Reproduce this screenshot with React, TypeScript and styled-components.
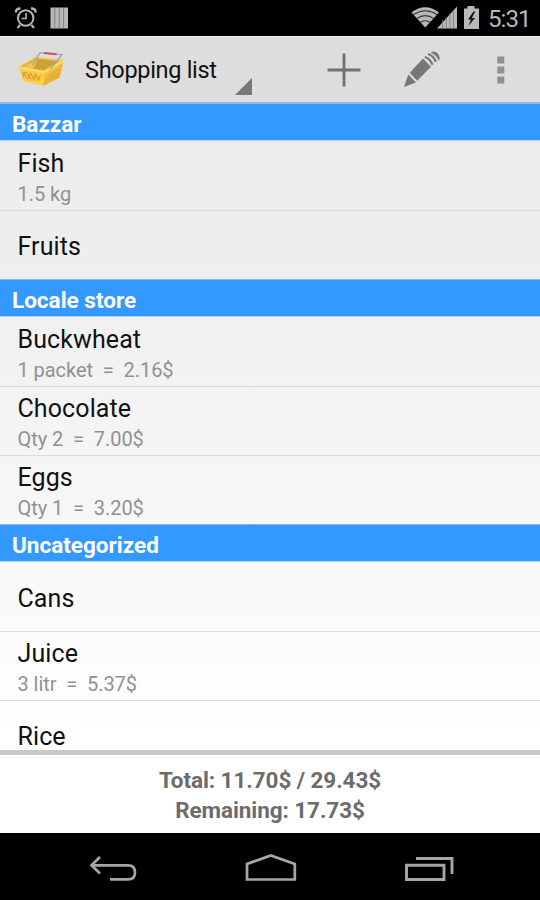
import React from "react";
import styled, { createGlobalStyle } from "styled-components";

const Global = createGlobalStyle`
  * { box-sizing: border-box; }
  body { margin: 0; background: #000; font-family: Roboto, "Liberation Sans", sans-serif; }
`;

const Screen = styled.main`
  display: flex;
  flex-direction: column;
  width: 540px;
  height: 900px;
  overflow: hidden;
  background: linear-gradient(#ececec 103px, #eeeeee 250px, #ffffff 750px);
`;

const StatusBar = styled.div`
  flex: none;
  display: flex;
  align-items: center;
  height: 36px;
  padding: 0 9px 0 14px;
  background: #000;
`;

const Clock = styled.span`
  width: 43px;
  margin-left: 8px;
  padding-top: 2px;
  font-size: 24px;
  line-height: 34px;
  letter-spacing: -0.9px;
  color: #b9b9b9;
`;

const Spacer = styled.div`
  flex: 1;
`;

const ActionBar = styled.header`
  flex: none;
  display: flex;
  height: 67px;
  padding-left: 16px;
  background: #dddddd;
  border-top: 1px solid #f2f2f2;
  border-bottom: 1px solid #a9b1bb;
`;

const Spinner = styled.div`
  display: flex;
  width: 182px;
  margin-left: 5px;
  justify-content: space-between;
`;

const Title = styled.h1`
  margin: 0 0 0 14px;
  font-size: 23.5px;
  font-weight: 400;
  line-height: 67px;
  letter-spacing: -0.3px;
  color: #111;
  white-space: nowrap;
`;

const SpinnerCorner = styled.svg`
  align-self: flex-end;
  flex: none;
  margin-bottom: 7px;
`;

const Action = styled.div<{ $width: number }>`
  display: flex;
  align-items: center;
  justify-content: center;
  width: ${(p) => p.$width}px;
`;

const List = styled.div`
  flex: none;
  height: 647px;
  overflow: hidden;
`;

const SectionHeader = styled.h2`
  height: 38px;
  margin: 0;
  padding: 1px 12px 0;
  border-top: 1px solid #86b9ee;
  border-bottom: 1px solid #b4d3f5;
  background: #3399ff;
  color: #fff;
  font-size: 22.5px;
  font-weight: 700;
  line-height: 38px;
`;

const Row = styled.div<{ $divided: boolean; $single: boolean }>`
  height: 69px;
  padding: ${(p) => (p.$single ? "20px" : "6px")} 17.5px 0;
  box-shadow: ${(p) => (p.$divided ? "inset 0 1px 0 #dcdcdc" : "none")};
`;

const Name = styled.div`
  font-size: 25px;
  line-height: 34px;
  letter-spacing: 0.1px;
  color: #111;
`;

const Detail = styled.div`
  font-size: 20px;
  line-height: 26px;
  letter-spacing: -0.05px;
  color: #919191;
  white-space: pre;
`;

const Summary = styled.footer`
  flex: none;
  height: 83px;
  padding-top: 10px;
  border-top: 5px solid #c9c9c9;
  background: #fff;
  color: #6c6c6c;
  font-size: 22.5px;
  font-weight: 700;
  line-height: 30px;
  letter-spacing: -0.08px;
  text-align: center;
`;

const NavBar = styled.nav`
  flex: 1;
  display: flex;
  align-items: center;
  justify-content: space-between;
  padding: 3px 85px 0 88px;
  background: #000;
`;

type Item = { name: string; detail?: string };

const sections: { title: string; items: Item[] }[] = [
  { title: "Bazzar", items: [{ name: "Fish", detail: "1.5 kg" }, { name: "Fruits" }] },
  {
    title: "Locale store",
    items: [
      { name: "Buckwheat", detail: "1 packet  =  2.16$" },
      { name: "Chocolate", detail: "Qty 2  =  7.00$" },
      { name: "Eggs", detail: "Qty 1  =  3.20$" },
    ],
  },
  {
    title: "Uncategorized",
    items: [{ name: "Cans" }, { name: "Juice", detail: "3 litr  =  5.37$" }, { name: "Rice" }],
  },
];

const StatusLeft = () => (
  <svg width="56" height="36" viewBox="14 0 56 36" fill="none" stroke="#b5b5b5">
    <circle cx="25.7" cy="18" r="7.7" strokeWidth="2" />
    <path d="M26 13v5.5h-4.5" strokeWidth="1.6" />
    <path d="M16 12.5q-.5-4 4.5-4M35.500 12.500q.5-4-4.500-4" strokeWidth="2.400" />
    <path d="M20 25l-2.500 3M31.500 25l2.500 3" strokeWidth="2.200" />
    <path d="M50.500 7.500h17.500v21h-17.500z" fill="#b8b8b8" stroke="none" />
    <path d="M54.800 8v20M59.200 8v20M63.600 8v20" stroke="#777" strokeWidth=".9" />
  </svg>
);

const StatusRight = () => (
  <svg width="70" height="36" viewBox="411 0 70 36">
    <path d="M412.500 12.500Q426 2 440 12.500L426.200 27.500z" fill="#b8b8b8" />
    <path d="M414.500 14.500q12-7.500 23.600 0M417.500 18.600q8.700-6 17.400 0M421 22.500q5.200-3.600 10.400 0" fill="none" stroke="#333" strokeWidth="1.100" />
    <path d="M458 6.500v22h-20z" fill="#b8b8b8" />
    <path d="M443.500 20v9M447.200 17v12M451 13v16M454.500 10v19" stroke="#777" strokeWidth=".8" />
    <path d="M465 8.500h3.500v-2.500h7v2.500h4.500v20.500h-15z" fill="#b8b8b8" />
    <path d="M474.500 11.500l-5.500 8h3l-2.500 6.500 6.500-8h-3.200l3.500-6.500z" fill="#111" />
  </svg>
);

const Basket = () => (
  <svg width="50" height="65" viewBox="16 37 50 65">
    <defs>
      <linearGradient id="front" x1="0" y1="0" x2="0" y2="1">
        <stop stopColor="#f7cf55" />
        <stop offset=".6" stopColor="#f9cb45" />
        <stop offset="1" stopColor="#ffd84e" />
      </linearGradient>
      <linearGradient id="side" x1="0" y1="0" x2="0.6" y2="1">
        <stop stopColor="#ffdc5a" />
        <stop offset="1" stopColor="#e0a426" />
      </linearGradient>
    </defs>
    <path d="M19 67.500L35.500 57.500 62 60.500 44 71.500z" fill="#e3b03c" />
    <path d="M23 67.500L37 59.500v8l-5 1.500z" fill="#efc44f" />
    <path d="M37 59.500l20 2-13 8.500-10-1.500z" fill="#d09f38" />
    <path d="M44.500 71L63 60.500 62.500 66 59.500 77.500 43 86z" fill="url(#side)" />
    <path d="M18.500 67L44.500 71 43 86 23.500 81z" fill="url(#front)" />
    <path d="M22 71.500l5 7M26 72l5 7.500M30 72.500l5 8M34.500 73l4 7M25 72l-2 5M31 73l-3 6M36 74l-3 6M40.500 75l-2.500 6" stroke="#c98f28" strokeOpacity=".75" strokeWidth="1.200" />
    <path d="M47 76.500l13-7.500M46.500 80.500l12.500-7" stroke="#dfa52a" strokeWidth=".9" />
    <path d="M18.800 67.500L44.500 72 63 61" fill="none" stroke="#ffdd61" strokeWidth="2.200" />
    <path d="M18.800 67L35.500 57.500 63 60.500" fill="none" stroke="#f4cc50" strokeWidth="1.200" />
    <path d="M32.500 65.500L40 52.700l22 2L50.500 69" fill="none" stroke="#a3a6ab" strokeWidth="1.300" />
    <path d="M44 53l12.500 1.200" stroke="#d64d56" strokeWidth="2" />
  </svg>
);

const Add = () => (
  <svg width="34" height="34" viewBox="0 0 34 34" stroke="#727272" strokeWidth="2.800">
    <path d="M17 .5v33M.5 17h33" />
  </svg>
);

const Pencil = () => (
  <svg width="38" height="38" viewBox="404 51 38 38" fill="#777">
    <path d="M404 87l4.300-12.500 7.700 8z" />
    <path d="M409.800 72.800L423 58.500l8 8.300-13.800 14z" />
    <path d="M424.800 57q5.500 1.800 7.600 7.800M428 54q5.700 1.800 7.800 7.800" fill="none" stroke="#777" strokeWidth="2.200" />
    <path d="M430.500 52.800q3.500-3 7 .5 3.500 3.500 1.200 7.500-2-5.800-8.200-8z" />
  </svg>
);

const Overflow = () => (
  <svg width="8" height="30" viewBox="0 0 8 30" fill="#909090">
    <path d="M.3 1.500h7v7h-7zM.3 11.500h7v7h-7zM.3 21.500h7v7h-7z" />
  </svg>
);

const Back = () => (
  <svg width="50" height="30" viewBox="88 853 50 30" fill="none" stroke="#a6a6a6" strokeWidth="2.700">
    <path d="M100 857l-8.500 8.300L100 873.500M92 865.300h36q7 0 7 7.100 0 7-7 7H110" />
  </svg>
);

const Home = () => (
  <svg width="54" height="30" viewBox="243.500 853 54 30" fill="none" stroke="#a6a6a6" strokeWidth="2.700">
    <path d="M246.500 879.500v-15.500l23.800-8.500 24 8.500v15.500z" />
  </svg>
);

const Recents = () => (
  <svg width="51" height="30" viewBox="404 853 51 30" fill="none" stroke="#a6a6a6" strokeWidth="2.900">
    <path d="M406.500 865.300h37.500v14.200h-37.500zM416 858.500h36v15.500" />
  </svg>
);

export default function App() {
  return (
    <>
      <Global />
      <Screen>
        <StatusBar>
          <StatusLeft />
          <Spacer />
          <StatusRight />
          <Clock>5:31</Clock>
        </StatusBar>
        <ActionBar>
          <Basket />
          <Spinner>
            <Title>Shopping list</Title>
            <SpinnerCorner width="18" height="17" viewBox="0 0 18 17">
              <path d="M17 0v17H0z" fill="#777" />
            </SpinnerCorner>
          </Spinner>
          <Spacer />
          <Action $width={79}><Add /></Action>
          <Action $width={79}><Pencil /></Action>
          <Action $width={78}><Overflow /></Action>
        </ActionBar>
        <List>
          {sections.map((section) => (
            <section key={section.title}>
              <SectionHeader>{section.title}</SectionHeader>
              {section.items.map((item, i) => (
                <Row key={item.name} $divided={i > 0} $single={!item.detail}>
                  <Name>{item.name}</Name>
                  {item.detail && <Detail>{item.detail}</Detail>}
                </Row>
              ))}
            </section>
          ))}
        </List>
        <Summary>
          <div>Total: 11.70$ / 29.43$</div>
          <div>Remaining: 17.73$</div>
        </Summary>
        <NavBar>
          <Back />
          <Home />
          <Recents />
        </NavBar>
      </Screen>
    </>
  );
}
